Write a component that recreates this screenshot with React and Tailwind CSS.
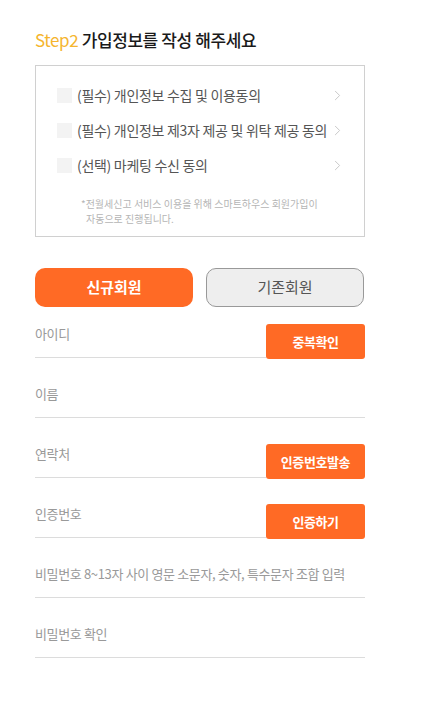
import { ChevronRight } from "lucide-react";

const AGREEMENTS = [
  "(필수) 개인정보 수집 및 이용동의",
  "(필수) 개인정보 제3자 제공 및 위탁 제공 동의",
  "(선택) 마케팅 수신 동의",
];

const FIELDS = [
  { label: "아이디", action: "중복확인" },
  { label: "이름" },
  { label: "연락처", action: "인증번호발송" },
  { label: "인증번호", action: "인증하기" },
  { label: "비밀번호 8~13자 사이 영문 소문자, 숫자, 특수문자 조합 입력" },
  { label: "비밀번호 확인" },
];

export default function App() {
  return (
    <div
      className="min-h-[711px] bg-white pl-[35px] pr-[66px] pt-[28px]"
      style={{ fontFamily: '"Noto Sans CJK KR", "Noto Sans", sans-serif' }}
    >
      {/* Title */}
      <h1 className="text-[17px] font-medium leading-[24px] tracking-[-0.4px] text-[#1a1a1a]">
        <span className="font-normal text-[#f5b52e]">Step2</span> 가입정보를 작성 해주세요
      </h1>

      {/* Agreements */}
      <div className="mt-[13px] h-[172px] border border-[#d0d0d0] pl-[21px] pr-[18px] pt-[19px]">
        <ul className="flex flex-col gap-[15px]">
          {AGREEMENTS.map(a => (
            <li key={a} className="flex h-[20px] items-center">
              <span className="h-[15px] w-[15px] shrink-0 bg-[#f3f3f3]" />
              <span className="ml-[5px] flex-1 text-[14px] tracking-[-0.3px] text-[#555]">{a}</span>
              <ChevronRight className="h-[17px] w-[17px] text-[#c8c8c8]" strokeWidth={1.4} />
            </li>
          ))}
        </ul>
        <div className="mt-[22px] pl-[24px] text-[10px] leading-[14.5px] text-[#b5b5b5]">
          <p>*전월세신고 서비스 이용을 위해 스마트하우스 회원가입이</p>
          <p className="pl-[5px]">자동으로 진행됩니다.</p>
        </div>
      </div>

      {/* Member type */}
      <div className="mt-[31px] flex gap-[13px]">
        <button className="h-[39px] w-[158px] rounded-[10px] bg-[#ff6a25] text-[15px] font-bold text-white">
          신규회원
        </button>
        <button className="h-[39px] w-[158px] rounded-[10px] border border-[#999] bg-[#eeeeee] text-[15px] text-[#555]">
          기존회원
        </button>
      </div>

      {/* Fields */}
      <div className="mt-px flex flex-col gap-[10px]">
        {FIELDS.map(f => (
          <div key={f.label} className="flex h-[50px] items-end">
            <div className="flex h-full flex-1 items-start border-b border-[#dcdcdc] pt-[18px]">
              <span className="text-[13px] leading-[16px] tracking-[-0.35px] text-[#999]">{f.label}</span>
            </div>
            {f.action && (
              <button className="-mb-px h-[35px] w-[99px] rounded-[3px] bg-[#ff6a25] text-[13px] font-bold tracking-[-0.4px] text-white">
                {f.action}
              </button>
            )}
          </div>
        ))}
      </div>
    </div>
  );
}
